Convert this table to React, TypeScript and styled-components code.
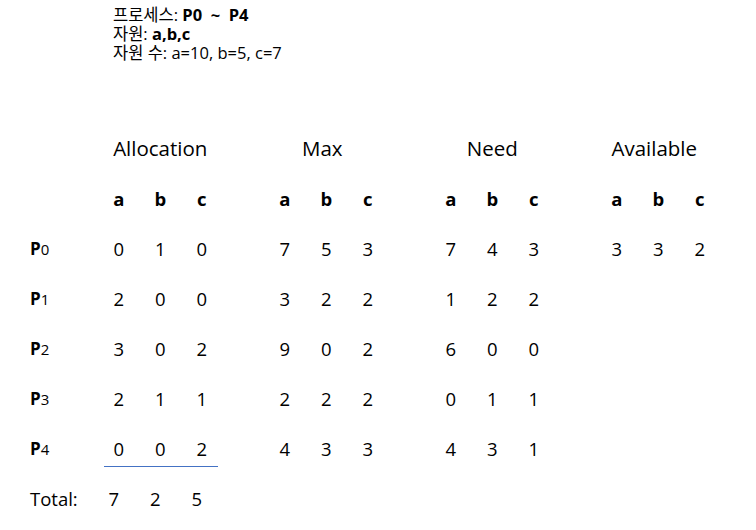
import React from "react";
import styled, { createGlobalStyle } from "styled-components";

const GlobalStyle = createGlobalStyle`
  body {
    margin: 0;
    background: #ffffff;
    color: #000000;
    font-family: "Open Sans", "Noto Sans CJK KR", sans-serif;
  }
`;

const Page = styled.div({
  width: 756,
  height: 530,
  overflow: "hidden",
});

const Intro = styled.div({
  paddingTop: 5,
  paddingLeft: 113,
  fontSize: 16.5,
  lineHeight: "19px",
  fontFamily: '"Open Sans", "Noto Sans CJK KR", sans-serif',
});

const Line = styled.div({
  height: 19,
});

const Strong = styled.b({
  fontWeight: 700,
});

const Table = styled.div({
  marginTop: 61,
  paddingLeft: 30,
  display: "grid",
  gridTemplateColumns: "68px repeat(15, 41.5px)",
  gridAutoRows: 50,
  alignItems: "center",
});

const GroupTitle = styled.div<{ $col: number; $offset?: number }>`
  grid-column: ${(p) => p.$col} / span 3;
  text-align: center;
  font-size: 20.5px;
  position: relative;
  left: ${(p) => p.$offset || 0}px;
`;

const Cell = styled.div<{ $bold?: boolean; $shift?: number }>`
  text-align: center;
  font-size: 18.5px;
  font-weight: ${(p) => (p.$bold ? 700 : 400)};
  padding-right: ${(p) => (p.$shift || 0) * 2}px;
`;

const Spacer = styled.div``;

const RowLabel = styled.div({
  gridColumn: 1,
  fontSize: 17,
  fontWeight: 700,
});

const Sub = styled.span({
  fontSize: 15,
  fontWeight: 400,
});

const TotalLabel = styled.div({
  gridColumn: 1,
  fontSize: 18.5,
});

const Underlined = styled.div({
  gridColumn: "span 3",
  display: "grid",
  gridTemplateColumns: "repeat(3, 41.5px)",
  alignItems: "center",
  height: "100%",
  position: "relative",
  "&::after": {
    content: '""',
    position: "absolute",
    left: 6,
    right: 4.5,
    top: 43,
    height: 1,
    background: "#4472c4",
  },
});

const groups = [
  { name: "Allocation", offset: 0 },
  { name: "Max", offset: -4 },
  { name: "Need", offset: 0 },
  { name: "Available", offset: -4 },
];
const cols = ["a", "b", "c"];

const rows: { id: string; alloc: number[]; max: number[]; need: number[]; avail?: number[] }[] = [
  { id: "0", alloc: [0, 1, 0], max: [7, 5, 3], need: [7, 4, 3], avail: [3, 3, 2] },
  { id: "1", alloc: [2, 0, 0], max: [3, 2, 2], need: [1, 2, 2] },
  { id: "2", alloc: [3, 0, 2], max: [9, 0, 2], need: [6, 0, 0] },
  { id: "3", alloc: [2, 1, 1], max: [2, 2, 2], need: [0, 1, 1] },
  { id: "4", alloc: [0, 0, 2], max: [4, 3, 3], need: [4, 3, 1] },
];

function Values({ values }: { values: number[] }) {
  return (
    <>
      {values.map((v, i) => (
        <Cell key={i}>{v}</Cell>
      ))}
    </>
  );
}

function App() {
  return (
    <Page>
      <GlobalStyle />
      <Intro>
        <Line>
          프로세스: <Strong>P0 &nbsp;~ &nbsp;P4</Strong>
        </Line>
        <Line>
          자원: <Strong>a,b,c</Strong>
        </Line>
        <Line>자원 수: a=10, b=5, c=7</Line>
      </Intro>

      <Table>
        {groups.map((g, i) => (
          <GroupTitle key={g.name} $col={2 + i * 4} $offset={g.offset}>
            {g.name}
          </GroupTitle>
        ))}

        {groups.map((g, i) => (
          <React.Fragment key={g.name}>
            {i === 0 && <Spacer />}
            {cols.map((c) => (
              <Cell key={c} $bold>
                {c}
              </Cell>
            ))}
            {i < 3 && <Spacer />}
          </React.Fragment>
        ))}

        {rows.map((r, idx) => (
          <React.Fragment key={r.id}>
            <RowLabel>
              P<Sub>{r.id}</Sub>
            </RowLabel>
            {idx === rows.length - 1 ? (
              <Underlined>
                <Values values={r.alloc} />
              </Underlined>
            ) : (
              <Values values={r.alloc} />
            )}
            <Spacer />
            <Values values={r.max} />
            <Spacer />
            <Values values={r.need} />
            <Spacer />
            {r.avail ? <Values values={r.avail} /> : null}
          </React.Fragment>
        ))}

        <TotalLabel>Total:</TotalLabel>
        {[7, 2, 5].map((v, i) => (
          <Cell key={i} $shift={5}>
            {v}
          </Cell>
        ))}
      </Table>
    </Page>
  );
}

export default App;
